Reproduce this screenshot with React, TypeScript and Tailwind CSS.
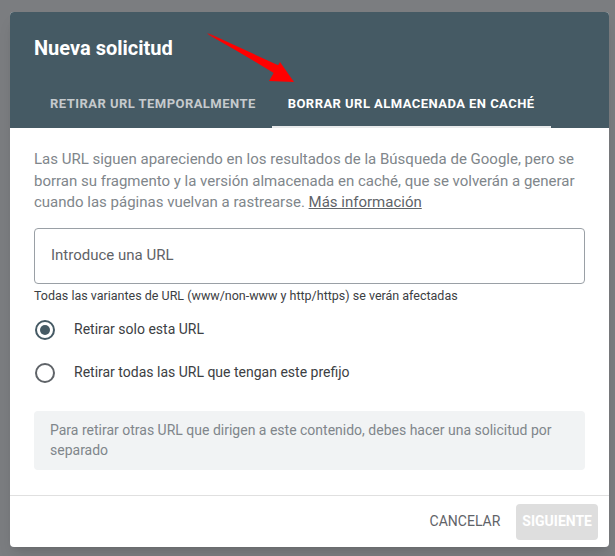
import React from "react";

function Arrow() {
  return (
    <svg
      className="absolute left-0 top-0 pointer-events-none"
      width="615"
      height="556"
      viewBox="0 0 615 556"
    >
      <polygon points="207,33 209,35 276,73 279,70 207,33" fill="#ff0000" />
      <polygon points="208,33 282,67 277,75" fill="#ff0000" />
      <polygon points="294,82 280,62 269,81" fill="#ff0000" />
    </svg>
  );
}

function Radio({ checked, label }: { checked?: boolean; label: string }) {
  return (
    <label className="flex items-center h-[40px] cursor-pointer">
      <span
        className={
          "flex items-center justify-center w-[20px] h-[20px] rounded-full border-2 ml-[1px] " +
          (checked ? "border-[#455a64]" : "border-[#5f6368]")
        }
      >
        {checked && <span className="w-[10px] h-[10px] rounded-full bg-[#455a64]" />}
      </span>
      <span className="ml-[19px] text-[14px] text-[#3c4043]">{label}</span>
    </label>
  );
}

export default function App() {
  return (
    <div
      className="relative w-[615px] h-[556px] bg-[#7b7d80] pt-[12px] pl-[10px] overflow-hidden"
      style={{ fontFamily: "Roboto, 'Liberation Sans', sans-serif" }}
    >
      <div className="w-[599px] h-[535px] bg-white rounded-[4px] overflow-hidden flex flex-col shadow-lg">
        <div className="bg-[#455a64] px-6">
          <h1 className="pt-[22px] text-[20px] leading-[28px] font-bold text-white">
            Nueva solicitud
          </h1>
          <div className="flex mt-[18px] h-[48px]">
            <div className="flex items-center px-4 text-[13px] font-bold uppercase tracking-[0.035em] text-[#c5cacd]">
              Retirar URL temporalmente
            </div>
            <div className="flex items-center px-4 text-[13px] font-bold uppercase tracking-[0.035em] text-white border-b-2 border-[#e8eaeb] pt-[2px]">
              Borrar URL almacenada en caché
            </div>
          </div>
        </div>

        <div className="flex-1 px-6 pt-[21px]">
          <p className="text-[15px] leading-[21.5px] text-[#80868b]">
            Las URL siguen apareciendo en los resultados de la Búsqueda de Google, pero se
            borran su fragmento y la versión almacenada en caché, que se volverán a generar
            cuando las páginas vuelvan a rastrearse.{" "}
            <a className="underline text-[#5f6368]">Más información</a>
          </p>

          <div className="mt-[14px] h-[56px] border border-[#9aa0a6] rounded-[4px] flex items-center px-4">
            <span className="text-[15px] text-[#5f6368]">Introduce una URL</span>
          </div>
          <p className="mt-[4px] text-[12.5px] leading-[16px] text-[#3c4043]">
            Todas las variantes de URL (www/non-www y http/https) se verán afectadas
          </p>

          <div className="mt-[6px] flex flex-col gap-[3px]">
            <Radio checked label="Retirar solo esta URL" />
            <Radio label="Retirar todas las URL que tengan este prefijo" />
          </div>

          <div className="mt-[18px] bg-[#f1f3f4] rounded-[4px] px-4 pt-[9px] pb-[10px] text-[14px] leading-[20px] text-[#80868b]">
            Para retirar otras URL que dirigen a este contenido, debes hacer una solicitud por
            separado
          </div>
        </div>

        <div className="border-t border-[#e0e0e0] h-[52px] flex items-center justify-end pr-[11px] gap-4">
          <button className="text-[14px] text-[#5f6368] uppercase">Cancelar</button>
          <button className="h-[36px] px-[6px] rounded-[4px] bg-[#dedede] text-white text-[14px] font-bold uppercase">
            Siguiente
          </button>
        </div>
      </div>
      <Arrow />
    </div>
  );
}
